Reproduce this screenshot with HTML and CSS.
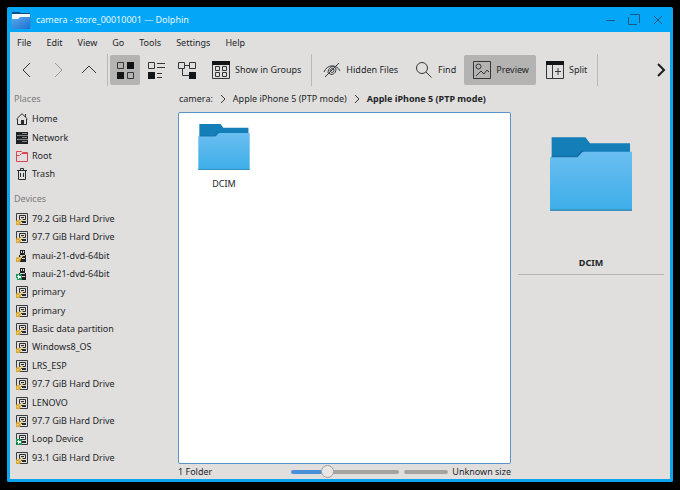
FILE: index.html
```html
<!DOCTYPE html>
<html lang="en">
<head>
<meta charset="utf-8">
<title>camera - store_00010001 — Dolphin</title>
<link rel="stylesheet" href="styles.css">
</head>
<body>
<svg class="defs" aria-hidden="true">
  <defs>
    <linearGradient id="folder-front" x1="0" y1="0" x2="0" y2="1">
      <stop offset="0" stop-color="#6abef0"/>
      <stop offset="1" stop-color="#3daee9"/>
    </linearGradient>
    <linearGradient id="app-front" x1="0" y1="0" x2="1" y2="1">
      <stop offset="0" stop-color="#58a9ee"/>
      <stop offset="1" stop-color="#1c6fce"/>
    </linearGradient>
  </defs>
  <symbol id="folder" viewBox="0 0 248 222">
    <path fill="#147eb8" d="M5 0H107L121 18H242V62H5Z"/>
    <path fill="#0f6a9e" d="M5 57H80L96 41H104L90 62H5Z"/>
    <path fill="url(#folder-front)" d="M0 60H83L99 44H248V222H0Z"/>
    <path fill="#3384ad" d="M0 218H248V222H0Z"/>
  </symbol>
  <symbol id="drive" viewBox="0 0 12 12">
    <path fill="none" stroke="#3a3d3f" d="M.5.5H11.5V11.5H.5Z"/>
    <path fill="none" stroke="#292c2e" d="M3.500 2.500H9.500V6.500H3.500Z"/>
    <path fill="#292c2e" d="M5 4H8V5H5ZM5 8H10V10H6V9H5Z"/>
  </symbol>
  <symbol id="stick" viewBox="0 0 12 12">
    <path fill="#202325" d="M4 0H9V5H10V12H3V5H4Z"/>
    <path fill="#d5d5d4" d="M5 1H6V3H5ZM7 1H8V3H7ZM4 5H9V6H4ZM6 8H9V9H6Z"/>
  </symbol>
  <symbol id="key" viewBox="0 0 12 12">
    <path fill="#d9a52c" d="M0 7.500L4 7L6 5L7 6L5 9L4 12H0Z"/>
    <path fill="#f5e2aa" d="M1 9H2.500V10.500H1ZM3 8L6 5.500L6.500 6.500L4 9Z"/>
  </symbol>
  <symbol id="mounted" viewBox="0 0 12 12">
    <path fill="#1c9955" d="M0 6H5V7H6V12H1V10H0Z"/>
    <path fill="#fff" d="M2 7H3V8H5V10H3V11H2V9H1V8H2Z"/>
  </symbol>
</svg>

<div class="window">
  <header class="titlebar">
    <svg class="app-icon" viewBox="0 0 20 18" aria-hidden="true">
      <path fill="#174d86" d="M1 1H8L10 2H19V9H1Z"/>
      <path fill="#f4f8fb" d="M1 3H19V9H1Z"/>
      <path fill="url(#app-front)" d="M0 8H7L9 6H20L19 18H1Z"/>
    </svg>
    <h1 class="title">camera - store_00010001 — Dolphin</h1>
    <div class="window-buttons">
      <button class="window-button" aria-label="Minimize"><svg viewBox="0 0 12 12"><path d="M2 6.500H11"/></svg></button>
      <button class="window-button" aria-label="Maximize"><svg viewBox="0 0 12 12"><path d="M2 .5H11.500V9M9 10.500H.5V3"/></svg></button>
      <button class="window-button" aria-label="Close"><svg viewBox="0 0 12 12"><path d="M2 2L10 10M10 2L2 10"/></svg></button>
    </div>
  </header>

  <nav class="menubar" aria-label="Menu">
    <button class="menu">File</button>
    <button class="menu">Edit</button>
    <button class="menu">View</button>
    <button class="menu">Go</button>
    <button class="menu">Tools</button>
    <button class="menu">Settings</button>
    <button class="menu">Help</button>
  </nav>

  <div class="toolbar" role="toolbar" aria-label="Main toolbar">
    <div class="tool-group">
      <button class="tool" aria-label="Back"><svg viewBox="0 0 18 18"><path d="M12 2L5 9L12 16"/></svg></button>
      <button class="tool tool-disabled" aria-label="Forward" disabled><svg viewBox="0 0 18 18"><path d="M6 2L13 9L6 16"/></svg></button>
      <button class="tool" aria-label="Up"><svg viewBox="0 0 18 18"><path d="M2 12L9 5L16 12"/></svg></button>
    </div>
    <div class="tool-group">
      <button class="tool tool-active" aria-label="Icons" aria-pressed="true"><svg viewBox="0 0 18 18"><path d="M1.500 1.500H7.500V7.500H1.500ZM11.500 11.500H17.500V17.500H11.500Z"/><path class="solid" d="M11 1H18V8H11ZM1 11H8V18H1Z"/></svg></button>
      <button class="tool" aria-label="Compact"><svg viewBox="0 0 18 18"><path d="M1.500 1.500H7.500V7.500H1.500ZM10 2.500H18M10 6.500H18M10 12.500H15M10 16.500H15"/><path class="solid" d="M1 11H8V18H1Z"/></svg></button>
      <button class="tool" aria-label="Details"><svg viewBox="0 0 18 18"><path d="M.5 1.500H6.500V7.500H.5ZM11.500 1.500H17.500V7.500H11.500ZM7 4.500H11M4.500 8V14.500H11"/><path class="solid" d="M11 11H18V18H11Z"/></svg></button>
      <button class="tool tool-labelled"><svg viewBox="0 0 18 18"><path d="M.5.5H17.500V17.500H.5ZM3.500 5.500H7.500V9.500H3.500ZM10.500 5.500H14.500V9.500H10.500ZM3.500 11.500H7.500V15.500H3.500ZM10.500 11.500H14.500V15.500H10.500Z"/><path class="solid" d="M0 0H18V4H0Z"/></svg>Show in Groups</button>
    </div>
    <div class="tool-group">
      <button class="tool tool-labelled"><svg viewBox="0 0 18 18"><path d="M1 11C4 3 14 3 17 10M2 16L16 2M5 12C5 5 12 4 13 8C13 13 8 15 6 12M7 10C7 7 11 7 11 9C11 12 8 12 7 10"/></svg>Hidden Files</button>
      <button class="tool tool-labelled"><svg viewBox="0 0 18 18"><circle cx="7" cy="7" r="5.500"/><path d="M11 11L16.500 16.500"/></svg>Find</button>
      <button class="tool tool-labelled tool-active" aria-pressed="true"><svg viewBox="0 0 18 18"><path d="M.5.5H17.500V17.500H.5ZM3 15L8 10L11 13L14 9L16 11"/><circle cx="5.500" cy="5.500" r="2.500"/></svg>Preview</button>
      <button class="tool tool-labelled"><svg viewBox="0 0 18 18"><path d="M.5.5H17.500V17.500H.5ZM6.500 3V18M9 10.500H15M12 7V14"/><path class="solid" d="M0 0H18V4H0Z"/></svg>Split</button>
    </div>
    <button class="tool tool-more" aria-label="More"><svg viewBox="0 0 18 18"><path d="M6 3L12 9L6 15"/></svg></button>
  </div>

  <div class="content">
    <aside class="sidebar">
      <h2 class="section-title">Places</h2>
      <ul class="places">
        <li><a class="place" href="#"><svg viewBox="0 0 12 12"><path fill="none" stroke="#292c2e" d="M.5 6L6 .7L11.500 6M1.500 6V11.500H10.500V6"/><path fill="#292c2e" d="M5 7H8V12H5ZM9 1H10V4H9Z"/></svg>Home</a></li>
        <li><a class="place" href="#"><svg viewBox="0 0 12 12"><path fill="#202325" d="M0 0H12V12H0Z"/><path fill="#85878a" d="M6 1H11V2H6ZM1 3H12V4H1ZM6 5H11V6H6ZM1 7H12V8H1ZM6 9H11V10H6Z"/></svg>Network</a></li>
        <li><a class="place" href="#"><svg viewBox="0 0 12 12"><path fill="none" stroke="#da4453" d="M.5 11.500V1.500H5.500L6.500 2.500H11.500V11.500ZM.5 5.500H3.500L5.500 3.500H11.500"/></svg>Root</a></li>
        <li><a class="place" href="#"><svg viewBox="0 0 12 12"><path fill="none" stroke="#292c2e" d="M1 2.500H11M4.500 2V.5H7.500V2M2.500 3V11.500H9.500V3M4.500 5V9M7.500 5V9"/></svg>Trash</a></li>
      </ul>
      <h2 class="section-title section-title-next">Devices</h2>
      <ul class="devices">
        <li><a class="place" href="#"><svg><use href="#drive"/><use href="#key"/></svg>79.2 GiB Hard Drive</a></li>
        <li><a class="place" href="#"><svg><use href="#drive"/><use href="#key"/></svg>97.7 GiB Hard Drive</a></li>
        <li><a class="place" href="#"><svg><use href="#stick"/><use href="#key"/></svg>maui-21-dvd-64bit</a></li>
        <li><a class="place" href="#"><svg><use href="#stick"/><use href="#mounted"/></svg>maui-21-dvd-64bit</a></li>
        <li><a class="place" href="#"><svg><use href="#drive"/><use href="#key"/></svg>primary</a></li>
        <li><a class="place" href="#"><svg><use href="#drive"/><use href="#key"/></svg>primary</a></li>
        <li><a class="place" href="#"><svg><use href="#drive"/><use href="#key"/></svg>Basic data partition</a></li>
        <li><a class="place" href="#"><svg><use href="#drive"/><use href="#key"/></svg>Windows8_OS</a></li>
        <li><a class="place" href="#"><svg><use href="#drive"/><use href="#key"/></svg>LRS_ESP</a></li>
        <li><a class="place" href="#"><svg><use href="#drive"/><use href="#key"/></svg>97.7 GiB Hard Drive</a></li>
        <li><a class="place" href="#"><svg><use href="#drive"/><use href="#key"/></svg>LENOVO</a></li>
        <li><a class="place" href="#"><svg><use href="#drive"/><use href="#key"/></svg>97.7 GiB Hard Drive</a></li>
        <li><a class="place" href="#"><svg><use href="#drive"/><use href="#mounted"/></svg>Loop Device</a></li>
        <li><a class="place" href="#"><svg><use href="#drive"/><use href="#key"/></svg>93.1 GiB Hard Drive</a></li>
      </ul>
    </aside>

    <main class="browser">
      <nav class="breadcrumbs" aria-label="Location">
        <a class="crumb" href="#">camera:</a>
        <svg class="crumb-arrow" viewBox="0 0 6 8"><path d="M1 0L5 4L1 8"/></svg>
        <a class="crumb" href="#">Apple iPhone 5 (PTP mode)</a>
        <svg class="crumb-arrow" viewBox="0 0 6 8"><path d="M1 0L5 4L1 8"/></svg>
        <a class="crumb crumb-current" href="#" aria-current="page">Apple iPhone 5 (PTP mode)</a>
      </nav>
      <div class="files">
        <a class="file" href="#"><svg class="file-icon"><use href="#folder"/></svg>DCIM</a>
      </div>
      <footer class="statusbar">
        <span>1 Folder</span>
        <input class="zoom" type="range" min="0" max="100" value="31" aria-label="Icon size">
        <span class="capacity"></span>
        <span>Unknown size</span>
      </footer>
    </main>

    <aside class="info">
      <svg class="info-icon"><use href="#folder"/></svg>
      <h2 class="info-name">DCIM</h2>
    </aside>
  </div>
</div>
</body>
</html>
```

FILE: styles.css
```css
* {
  box-sizing: border-box;
}

body {
  display: flex;
  min-height: 100vh;
  margin: 0;
  padding: 7px 7px 8px;
  background: #000;
  color: #232629;
  font: 9px/14px "Noto Sans", sans-serif;
}

h1,
h2,
ul {
  margin: 0;
  padding: 0;
  font: inherit;
  list-style: none;
}

button {
  padding: 0;
  border: 0;
  background: none;
  color: inherit;
  font: inherit;
}

a {
  color: inherit;
  text-decoration: none;
}

svg {
  flex: none;
  fill: none;
}

.defs {
  position: absolute;
  width: 0;
  height: 0;
}

.window {
  display: flex;
  flex: 1;
  flex-direction: column;
  min-width: 0;
  border: 3px solid #0ba4ee;
  border-top: 0;
  border-radius: 2px;
  background: #e0dfde;
}

/* Title bar */

.titlebar {
  display: flex;
  align-items: center;
  height: 25px;
  gap: 5px;
  padding: 0 6px 0 1px;
  background: #04a7f7;
}

.app-icon {
  width: 20px;
  height: 18px;
}

.title {
  flex: 1;
  color: #e4f5ff;
}

.window-buttons {
  display: flex;
  gap: 12px;
}

.window-button {
  width: 12px;
  height: 12px;
}

.window-button svg {
  display: block;
  stroke: #1b5a80;
}

/* Menu bar */

.menubar {
  display: flex;
  gap: 15px;
  padding: 4px 7px;
}

/* Toolbar */

.toolbar {
  display: flex;
  align-items: center;
}

.tool-group {
  display: flex;
  gap: 1px;
  padding: 1px 3px 1px 2px;
  border-right: 1px solid #b9b8b7;
}

.tool {
  display: flex;
  align-items: center;
  height: 30px;
  gap: 5px;
  padding: 0 6px;
  border-radius: 2px;
  white-space: nowrap;
}

.tool-labelled {
  padding: 0 7px 0 9px;
}

.tool svg {
  width: 18px;
  height: 18px;
  stroke: #34373a;
}

.tool .solid {
  fill: #121415;
  stroke: none;
}

.tool-disabled svg {
  stroke: #999;
}

.tool-active {
  background: #b4b3b2;
}

.tool-more {
  margin-left: auto;
  padding: 0;
}

.tool-more svg {
  stroke: #1b1e20;
  stroke-width: 2;
}

/* Main area */

.content {
  display: grid;
  flex: 1;
  grid-template-columns: 157px minmax(0, 1fr) 146px;
  column-gap: 7px;
  padding: 5px 6px 0 4px;
}

.sidebar {
  display: flex;
  flex-direction: column;
  padding-bottom: 12px;
}

.section-title {
  padding: 1px 0 4px;
  color: #7b7c7c;
}

.section-title-next {
  padding: 8px 0 4px;
}

.places,
.devices {
  display: grid;
  grid-auto-rows: 1fr;
  align-items: center;
}

.places {
  flex: 4;
}

.devices {
  flex: 14;
}

.place {
  display: flex;
  align-items: center;
  gap: 4px;
  padding-left: 2px;
}

.place svg {
  width: 12px;
  height: 12px;
}

.browser {
  display: flex;
  flex-direction: column;
}

.breadcrumbs {
  display: flex;
  align-items: center;
  gap: 7px;
  padding: 1px 1px 6px;
  white-space: nowrap;
}

.crumb-arrow {
  width: 6px;
  height: 8px;
  stroke: #34373a;
}

.crumb-current {
  font-weight: 700;
}

.files {
  flex: 1;
  padding: 11px 19px;
  border: 1px solid #5b93cc;
  border-radius: 2px;
  background: #fff;
}

.file {
  display: inline-flex;
  flex-direction: column;
  align-items: center;
  gap: 7px;
}

.file-icon {
  width: 52px;
  height: 46px;
}

.statusbar {
  display: flex;
  align-items: center;
  gap: 4px;
  height: 15px;
}

.zoom {
  width: 108px;
  height: 13px;
  margin: 0 1px 0 auto;
  appearance: none;
  background: none;
}

.zoom::-webkit-slider-runnable-track {
  height: 4px;
  border-radius: 2px;
  background: linear-gradient(90deg, #4a90d9 33%, #a4a49f 33%);
}

.zoom::-webkit-slider-thumb {
  width: 13px;
  height: 13px;
  margin-top: -5px;
  appearance: none;
  border: 1px solid #a0a09e;
  border-radius: 50%;
  background: #e8e7e6;
}

.capacity {
  width: 44px;
  height: 4px;
  border-radius: 2px;
  background: #a4a49f;
}

/* Information panel */

.info {
  display: flex;
  flex-direction: column;
  align-items: center;
  padding-top: 46px;
}

.info-icon {
  width: 82px;
  height: 74px;
}

.info-name {
  align-self: stretch;
  margin-top: 45px;
  padding-bottom: 4px;
  border-bottom: 1px solid #b4b3b2;
  font-weight: 700;
  text-align: center;
}
```
